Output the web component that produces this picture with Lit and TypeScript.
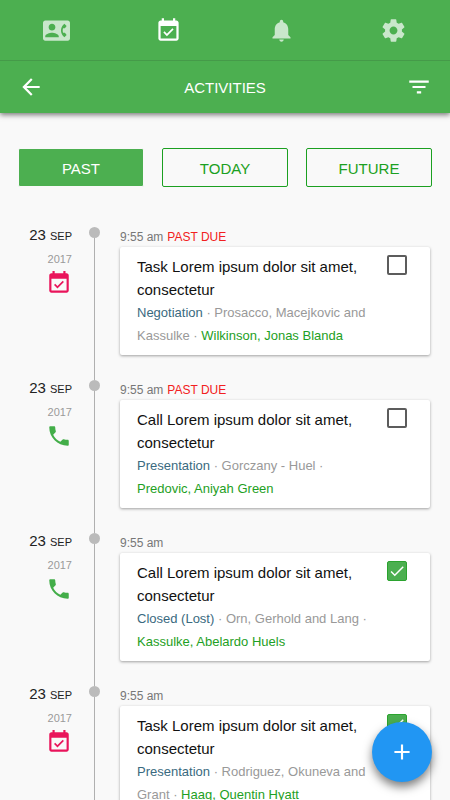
import { LitElement, html, css, svg } from "lit";
import { customElement, property, state } from "lit/decorators.js";
import { classMap } from "lit/directives/class-map.js";

type Kind = "task" | "call";

interface Activity {
  id: number;
  kind: Kind;
  day: string;
  month: string;
  year: string;
  time: string;
  pastDue: boolean;
  title: string;
  stage: string;
  company: string;
  contact: string;
  done: boolean;
}

const icons: Record<string, string> = {
  contacts:
    "M22 3H2C.9 3 0 3.9 0 5v14c0 1.1.9 2 2 2h20c1.1 0 1.99-.9 1.99-2L24 5c0-1.1-.9-2-2-2zM8 6c1.66 0 3 1.34 3 3s-1.34 3-3 3-3-1.34-3-3 1.34-3 3-3zm6 12H2v-1c0-2 4-3.1 6-3.1s6 1.1 6 3.1v1zm3.85-4h1.64L21 16l-1.99 1.99c-1.31-.98-2.28-2.38-2.73-3.99-.18-.64-.28-1.31-.28-2s.1-1.36.28-2c.45-1.62 1.42-3.01 2.73-3.99L21 8l-1.51 2h-1.64c-.22.63-.35 1.3-.35 2s.13 1.37.35 2z",
  task:
    "M16.53 11.06L15.47 10l-4.88 4.88-2.12-2.12-1.06 1.06L10.59 17l5.94-5.94zM19 3h-1V1h-2v2H8V1H6v2H5c-1.11 0-1.99.9-1.99 2L3 19c0 1.1.89 2 2 2h14c1.1 0 2-.9 2-2V5c0-1.1-.9-2-2-2zm0 16H5V8h14v11z",
  bell:
    "M12 22c1.1 0 2-.9 2-2h-4c0 1.1.89 2 2 2zm6-6v-5c0-3.07-1.64-5.64-4.5-6.32V4c0-.83-.67-1.5-1.5-1.5s-1.5.67-1.5 1.5v.68C7.63 5.36 6 7.92 6 11v5l-2 2v1h16v-1l-2-2z",
  settings:
    "M19.43 12.98c.04-.32.07-.64.07-.98s-.03-.66-.07-.98l2.11-1.65c.19-.15.24-.42.12-.64l-2-3.46c-.12-.22-.39-.3-.61-.22l-2.49 1c-.52-.4-1.08-.73-1.69-.98l-.38-2.65C14.46 2.18 14.25 2 14 2h-4c-.25 0-.46.18-.49.42l-.38 2.65c-.61.25-1.17.59-1.69.98l-2.49-1c-.23-.09-.49 0-.61.22l-2 3.46c-.13.22-.07.49.12.64l2.11 1.65c-.04.32-.07.65-.07.98s.03.66.07.98l-2.11 1.65c-.19.15-.24.42-.12.64l2 3.46c.12.22.39.3.61.22l2.49-1c.52.4 1.08.73 1.69.98l.38 2.65c.03.24.24.42.49.42h4c.25 0 .46-.18.49-.42l.38-2.65c.61-.25 1.17-.59 1.69-.98l2.49 1c.23.09.49 0 .61-.22l2-3.46c.12-.22.07-.49-.12-.64l-2.11-1.65zM12 15.5c-1.93 0-3.5-1.57-3.5-3.5s1.57-3.5 3.5-3.5 3.5 1.57 3.5 3.5-1.57 3.5-3.5 3.5z",
  back: "M20 11H7.83l5.59-5.59L12 4l-8 8 8 8 1.41-1.41L7.83 13H20v-2z",
  filter: "M10 18h4v-2h-4v2zM3 6v2h18V6H3zm3 7h12v-2H6v2z",
  call:
    "M6.62 10.79c1.44 2.83 3.76 5.14 6.59 6.59l2.2-2.2c.27-.27.67-.36 1.02-.24 1.12.37 2.33.57 3.57.57.55 0 1 .45 1 1V20c0 .55-.45 1-1 1-9.39 0-17-7.61-17-17 0-.55.45-1 1-1h3.5c.55 0 1 .45 1 1 0 1.25.2 2.45.57 3.57.11.35.03.74-.25 1.02l-2.2 2.2z",
  add: "M19 13h-6v6h-2v-6H5v-2h6V5h2v6h6v2z",
  check: "M9 16.17L4.83 12l-1.42 1.41L9 19 21 7l-1.41-1.41z",
};

const icon = (name: string) => html`
  <svg class="icon" viewBox="0 0 24 24" aria-hidden="true">
    ${svg`<path d=${icons[name]}></path>`}
  </svg>
`;

const iconStyles = css`
  .icon {
    display: block;
    width: 26px;
    height: 26px;
    fill: currentColor;
  }
`;

const initial: Activity[] = [
  {
    id: 1, kind: "task", day: "23", month: "SEP", year: "2017", time: "9:55 am", pastDue: true,
    title: "Task Lorem ipsum dolor sit amet, consectetur", stage: "Negotiation",
    company: "Prosacco, Macejkovic and Kassulke", contact: "Wilkinson, Jonas Blanda", done: false,
  },
  {
    id: 2, kind: "call", day: "23", month: "SEP", year: "2017", time: "9:55 am", pastDue: true,
    title: "Call Lorem ipsum dolor sit amet, consectetur", stage: "Presentation",
    company: "Gorczany - Huel", contact: "Predovic, Aniyah Green", done: false,
  },
  {
    id: 3, kind: "call", day: "23", month: "SEP", year: "2017", time: "9:55 am", pastDue: false,
    title: "Call Lorem ipsum dolor sit amet, consectetur", stage: "Closed (Lost)",
    company: "Orn, Gerhold and Lang", contact: "Kassulke, Abelardo Huels", done: true,
  },
  {
    id: 4, kind: "task", day: "23", month: "SEP", year: "2017", time: "9:55 am", pastDue: false,
    title: "Task Lorem ipsum dolor sit amet, consectetur", stage: "Presentation",
    company: "Rodriguez, Okuneva and Grant", contact: "Haag, Quentin Hyatt", done: true,
  },
];

@customElement("activity-entry")
export class ActivityEntry extends LitElement {
  @property({ attribute: false }) activity!: Activity;

  static styles = [
    iconStyles,
    css`
      :host {
        display: grid;
        grid-template-columns: 72px auto 1fr;
      }
      .when {
        text-align: right;
        color: #222;
      }
      .date {
        font-size: 15px;
        line-height: 16px;
      }
      .month {
        font-size: 11px;
      }
      .year {
        padding-top: 7px;
        font-size: 11px;
        line-height: 16px;
        color: #999;
      }
      .kind {
        display: flex;
        justify-content: flex-end;
        padding-top: 3px;
      }
      .task {
        color: #e9145b;
      }
      .call {
        color: #43ae49;
      }
      .rail {
        width: 11px;
        margin: 0 20px 0 17px;
        display: flex;
        flex-direction: column;
        align-items: center;
      }
      .dot {
        flex: none;
        width: 11px;
        height: 11px;
        border-radius: 50%;
        background: #bbb;
      }
      .line {
        flex: 1;
        width: 1px;
        background: #b0b0b0;
      }
      .body {
        min-width: 0;
        padding: 0 20px 25px 0;
      }
      .label {
        display: flex;
        gap: 4px;
        font-size: 12px;
        line-height: 20px;
        color: #777;
      }
      .due {
        color: #f22020;
      }
      .card {
        display: grid;
        grid-template-columns: 1fr 20px;
        gap: 17px;
        padding: 8px 23px 8px 17px;
        border-radius: 2px;
        background: #fff;
        box-shadow: 0 1px 3px rgba(0, 0, 0, 0.36);
      }
      .title,
      .meta {
        margin: 0;
        line-height: 23px;
      }
      .title {
        font-size: 15px;
        font-weight: 400;
        color: #111;
      }
      .meta {
        font-size: 13px;
        color: #999;
      }
      .meta a {
        text-decoration: none;
      }
      .stage {
        color: #3a6a80;
      }
      .contact {
        color: #1ea024;
      }
      .tick {
        display: grid;
        width: 20px;
        height: 20px;
        color: #fff;
        cursor: pointer;
      }
      .tick > * {
        grid-area: 1 / 1;
        place-self: center;
      }
      .box {
        appearance: none;
        box-sizing: border-box;
        width: 20px;
        height: 20px;
        margin: 0;
        border: 2px solid #5c5c5c;
        border-radius: 2px;
        background: #fff;
      }
      .box:checked {
        border: 1px solid #2ba32f;
        background: #4caf50;
      }
      .tick .icon {
        width: 18px;
        height: 18px;
        pointer-events: none;
      }
    `,
  ];

  private toggle() {
    this.dispatchEvent(new CustomEvent("toggle-done", { detail: this.activity.id }));
  }

  render() {
    const a = this.activity;
    return html`
      <div class="when">
        <div class="date">${a.day} <span class="month">${a.month}</span></div>
        <div class="year">${a.year}</div>
        <div class="kind ${a.kind}">${icon(a.kind)}</div>
      </div>
      <div class="rail"><span class="dot"></span><span class="line"></span></div>
      <div class="body">
        <div class="label">
          <span>${a.time}</span>${a.pastDue ? html`<span class="due">PAST DUE</span>` : null}
        </div>
        <article class="card">
          <div>
            <h2 class="title">${a.title}</h2>
            <p class="meta">
              <a class="stage" href="#stage">${a.stage}</a>
              <span>· ${a.company} ·</span>
              <a class="contact" href="#contact">${a.contact}</a>
            </p>
          </div>
          <label class="tick">
            <input class="box" type="checkbox" aria-label="Done" .checked=${a.done} @change=${this.toggle} />
            ${a.done ? icon("check") : null}
          </label>
        </article>
      </div>
    `;
  }
}

@customElement("app-root")
export class AppRoot extends LitElement {
  @state() private tab = "PAST";
  @state() private activities = initial;

  static styles = [
    iconStyles,
    css`
      :host {
        display: flex;
        flex-direction: column;
        height: 100vh;
        overflow: hidden;
        background: #f9f9f9;
        font-family: "Liberation Sans", Arial, sans-serif;
      }
      button {
        margin: 0;
        padding: 0;
        border: 0;
        background: none;
        color: inherit;
        font: inherit;
        cursor: pointer;
      }
      .header {
        flex: none;
        z-index: 1;
        background: #4caf50;
        color: #fff;
        box-shadow: 0 2px 5px rgba(0, 0, 0, 0.5);
      }
      .nav {
        display: grid;
        grid-template-columns: repeat(4, 1fr);
        height: 60px;
        border-bottom: 1px solid #459a49;
      }
      .nav-item {
        display: grid;
        place-items: center;
        color: #c9e7cb;
      }
      .nav-item .icon {
        width: 27px;
        height: 27px;
      }
      .current {
        color: #fff;
      }
      .bar {
        display: grid;
        grid-template-columns: 26px 1fr 26px;
        align-items: center;
        height: 52px;
        padding: 0 18px;
      }
      .heading {
        margin: 0;
        font-size: 15px;
        font-weight: 400;
        text-align: center;
      }
      .content {
        flex: 1;
        min-height: 0;
        overflow-y: auto;
        scrollbar-width: none;
      }
      .tabs {
        display: grid;
        grid-template-columns: repeat(3, 1fr);
        gap: 18px;
        padding: 35px 18px 40px;
      }
      .tabs .tab {
        height: 39px;
        padding-top: 2px;
        border: 1px solid #1ba021;
        border-radius: 2px;
        font-size: 15px;
        color: #1ba021;
      }
      .tabs .selected {
        border-color: #f9f9f9;
        background: #4caf50;
        color: #fff;
      }
      .add {
        position: fixed;
        z-index: 2;
        right: 18px;
        bottom: 18px;
        display: grid;
        place-items: center;
        width: 60px;
        height: 60px;
        border-radius: 50%;
        background: #2196f3;
        color: #fff;
        box-shadow: 0 5px 10px rgba(0, 0, 0, 0.5);
      }
    `,
  ];

  private toggleDone(id: number) {
    this.activities = this.activities.map((a) => (a.id === id ? { ...a, done: !a.done } : a));
  }

  render() {
    const nav = [
      ["contacts", "Contacts"],
      ["task", "Activities"],
      ["bell", "Notifications"],
      ["settings", "Settings"],
    ];
    return html`
      <header class="header">
        <nav class="nav">
          ${nav.map(
            ([name, label]) => html`<a
              class=${classMap({ "nav-item": true, current: name === "task" })}
              href="#${name}"
              aria-label=${label}
              >${icon(name)}</a
            >`
          )}
        </nav>
        <div class="bar">
          <button aria-label="Back">${icon("back")}</button>
          <h1 class="heading">ACTIVITIES</h1>
          <button aria-label="Filter">${icon("filter")}</button>
        </div>
      </header>
      <main class="content">
        <div class="tabs">
          ${["PAST", "TODAY", "FUTURE"].map(
            (name) => html`<button
              class=${classMap({ tab: true, selected: this.tab === name })}
              aria-pressed=${this.tab === name}
              @click=${() => (this.tab = name)}
            >
              ${name}
            </button>`
          )}
        </div>
        ${this.activities.map(
          (a) => html`<activity-entry
            .activity=${a}
            @toggle-done=${() => this.toggleDone(a.id)}
          ></activity-entry>`
        )}
      </main>
      <button class="add" aria-label="Add activity">${icon("add")}</button>
    `;
  }
}
